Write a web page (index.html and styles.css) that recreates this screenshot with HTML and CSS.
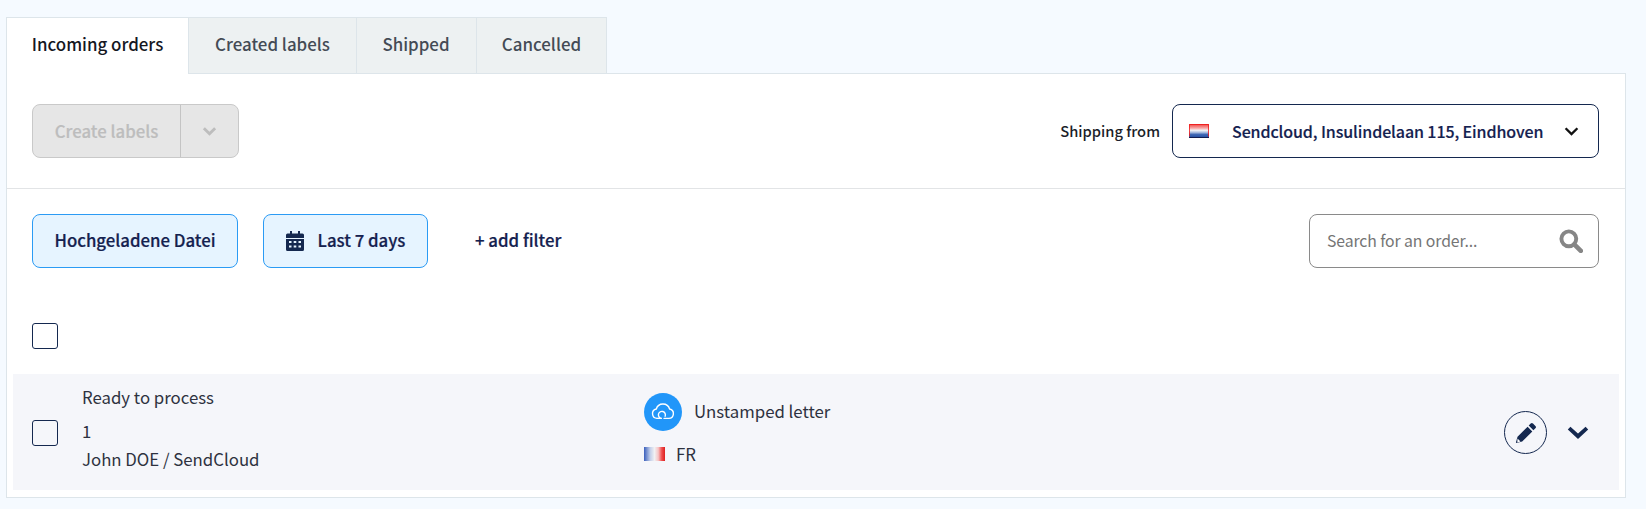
FILE: index.html
```html
<!DOCTYPE html>
<html lang="en">
<head>
<meta charset="utf-8">
<title>Incoming orders</title>
<link rel="stylesheet" href="styles.css">
</head>
<body>
<main class="page">
  <nav class="tabs">
    <a class="tab tab-active">Incoming orders</a>
    <a class="tab tab-created">Created labels</a>
    <a class="tab tab-shipped">Shipped</a>
    <a class="tab tab-cancelled">Cancelled</a>
  </nav>
  <section class="panel">
    <div class="toolbar">
      <div class="split">
        <span class="split-main">Create labels</span>
        <span class="split-arrow">
          <svg class="chev-sm" viewBox="0 0 16 10"><path d="M2 2l6 6 6-6" fill="none" stroke="currentColor" stroke-width="3"/></svg>
        </span>
      </div>
      <div class="ship">
        <span class="ship-label">Shipping from</span>
        <div class="ship-select">
          <svg class="flag-nl" viewBox="0 0 20 14">
            <defs>
              <linearGradient id="nl" x1="0" y1="0" x2="0" y2="1">
                <stop offset="0" stop-color="#f0403f"/><stop offset=".3" stop-color="#f8a9a8"/>
                <stop offset=".45" stop-color="#f4f4f6"/><stop offset=".6" stop-color="#a9bde0"/>
                <stop offset=".75" stop-color="#3f68b5"/><stop offset="1" stop-color="#1f4a9e"/>
              </linearGradient>
            </defs>
            <rect width="20" height="14" fill="url(#nl)"/>
            <path d="M.5 12.5V.5h19v12" fill="none" stroke="#f01616" stroke-opacity=".8"/>
            <path d="M0 13.5h20" stroke="#111d50"/>
          </svg>
          <span class="ship-text">Sendcloud, Insulindelaan 115, Eindhoven</span>
          <svg class="chev-ship" viewBox="0 0 14 10"><path d="M1.5 2l5.5 5.500L12.500 2" fill="none" stroke="#111" stroke-width="2.200"/></svg>
        </div>
      </div>
    </div>
    <div class="filters">
      <button class="chip chip-file">Hochgeladene Datei</button>
      <button class="chip chip-date">
        <svg class="cal" viewBox="0 0 18 20">
          <path fill="#14284f" d="M4 0h2v2.500h6V0h2v2.500h2.500A1.500 1.500 0 0 1 18 4v3H0V4a1.500 1.500 0 0 1 1.500-1.500H4z"/>
          <path fill="#14284f" fill-rule="evenodd" d="M0 8h18v10.500a1.500 1.500 0 0 1-1.500 1.500h-15A1.500 1.500 0 0 1 0 18.500zM3 10v2h2.500v-2zm4.700 0v2h2.600v-2zm4.800 0v2H15v-2zM3 14.500v2h2.500v-2zm4.700 0v2h2.600v-2zm4.800 0v2H15v-2z"/>
        </svg>
        <span>Last 7 days</span>
      </button>
      <a class="add-filter">+ add filter</a>
      <label class="search">
        <span class="search-ph">Search for an order...</span>
        <svg class="search-ico" viewBox="0 0 22 22"><circle cx="9" cy="9" r="6.800" fill="none" stroke="#868686" stroke-width="3.600"/><path d="M14 14l6 6" stroke="#868686" stroke-width="4.200" stroke-linecap="round"/></svg>
      </label>
    </div>
    <div class="select-all"><span class="check"></span></div>
    <article class="order">
      <span class="check"></span>
      <div class="order-info">
        <div class="status">Ready to process</div>
        <div class="order-no">1</div>
        <div>John DOE / SendCloud</div>
      </div>
      <div class="order-ship">
        <div class="method">
          <span class="cloud">
            <svg viewBox="0 0 24 16"><path d="M6.500 14.500a4.500 4.500 0 0 1-.8-8.900 6.500 6.500 0 0 1 12.500 0 4.500 4.500 0 0 1-.7 8.900h-4.500" fill="none" stroke="#fff" stroke-width="1.300" stroke-linecap="round"/><path d="M6.500 14.500H11a3.300 3.300 0 1 1 3-2" fill="none" stroke="#fff" stroke-width="1.300" stroke-linecap="round"/></svg>
          </span>
          <span>Unstamped letter</span>
        </div>
        <div class="dest">
          <svg class="flag-fr" viewBox="0 0 21 14">
            <defs>
              <linearGradient id="fr">
                <stop offset="0" stop-color="#3a5fbc"/><stop offset=".3" stop-color="#c3cfe9"/>
                <stop offset=".5" stop-color="#f1f1f3"/><stop offset=".68" stop-color="#f6c4c4"/>
                <stop offset=".85" stop-color="#ef4c4c"/><stop offset="1" stop-color="#dd2020"/>
              </linearGradient>
            </defs>
            <rect width="21" height="14" fill="url(#fr)"/>
          </svg>
          <span>FR</span>
        </div>
      </div>
      <div class="order-actions">
        <span class="edit">
          <svg viewBox="0 0 22 22"><path fill="#14284f" d="M15.700 1.600a1.600 1.600 0 0 1 2.300 0l2.400 2.400a1.600 1.600 0 0 1 0 2.300l-2 2-4.700-4.700zM12.600 4.700l4.700 4.700L7.200 19.500 1.500 21l-.6-.6L2.500 14.800z"/><path fill="#fff" d="M2.500 16.500l3 3-3.200 1z"/></svg>
        </span>
        <svg class="chev-row" viewBox="0 0 20 12"><path d="M1.800 2l8.200 7.500L18.200 2" fill="none" stroke="#14284f" stroke-width="3.600"/></svg>
      </div>
    </article>
  </section>
</main>
</body>
</html>
```
FILE: styles.css
```css
* { box-sizing: border-box; }
html, body { margin: 0; height: 100%; }
body {
  background: #f5faff;
  font-family: "Noto Sans CJK SC", "Noto Sans", sans-serif;
  font-size: 17px;
  line-height: 24px;
  color: #2b2f3a;
}
.page { padding: 17px 20px 0 6px; }

.tabs { display: flex; height: 57px; position: relative; z-index: 1; margin-bottom: -1px; }
.tab {
  display: flex; align-items: center; justify-content: center;
  background: #edf1f2;
  border: 1px solid #dde5ea; border-left: 0;
  color: #444b55; font-weight: 500; font-size: 16.9px;
  padding-bottom: 4px;
}
.tab-active {
  width: 183px; background: #fff; color: #15171f;
  border-left: 1px solid #dde5ea; border-bottom: 0; border-right: 1px solid #dde5ea;
}
.tab-created { width: 168px; }
.tab-shipped { width: 120px; padding-right: 1px; }
.tab-cancelled { width: 130px; }

.panel {
  background: #fff;
  border: 1px solid #dde5ea;
  height: 425px;
  padding: 0 6px;
  display: flex; flex-direction: column;
}

.toolbar {
  margin: 0 -6px;
  height: 115px;
  padding: 30px 26px 0 25px;
  border-bottom: 1px solid #e2e4e6;
  display: flex; justify-content: space-between; align-items: flex-start;
}
.split {
  display: flex; width: 207px; height: 54px;
  background: #e6e6e6; border: 1px solid #c9c9c9; border-radius: 8px;
  color: #bdbdbd; font-weight: 500; font-size: 16.8px;
  -webkit-text-stroke: .2px currentColor;
}
.split-main { width: 148px; display: flex; align-items: center; justify-content: center; border-right: 1px solid #c4c4c4; padding-bottom: 1px; }
.split-arrow { flex: 1; display: flex; align-items: center; justify-content: center; }
.chev-sm { width: 15px; height: 10px; }

.ship { display: flex; align-items: center; gap: 12px; }
.ship-label { font-size: 14.7px; font-weight: 500; color: #1c1f2a; }
.ship-select {
  width: 427px; height: 54px;
  display: flex; align-items: center;
  padding: 0 19px 0 16px;
  border: 1px solid #14284f; border-radius: 8px;
  color: #14214f; font-weight: 500; font-size: 16px; letter-spacing: -.1px;
}
.flag-nl { width: 20px; height: 14px; flex: none; }
.ship-text { margin-left: 23px; flex: 1; white-space: nowrap; padding-bottom: 1px; -webkit-text-stroke: .15px currentColor; }
.chev-ship { width: 15px; height: 11px; flex: none; }

.filters {
  display: flex; align-items: center;
  margin: 25px 20px 0 19px;
}
.chip {
  font: inherit; font-weight: 500; font-size: 16.8px;
  height: 54px; padding: 0 0 2px;
  background: #e6f4ff; border: 1px solid #2b9bf4; border-radius: 8px;
  color: #14214f;
  display: flex; align-items: center; justify-content: center;
  -webkit-text-stroke: .2px currentColor;
}
.chip-file { width: 206px; }
.chip-date { width: 165px; margin-left: 25px; gap: 14px; }
.cal { width: 18px; height: 20px; margin-top: 2px; }
.add-filter { margin-left: 47px; font-weight: 500; font-size: 16.8px; color: #14214f; padding-bottom: 2px; -webkit-text-stroke: .2px currentColor; }
.search {
  margin-left: auto; width: 290px; height: 54px;
  display: flex; align-items: center; justify-content: space-between;
  padding: 0 15px 0 17px;
  border: 1px solid #8a8a8a; border-radius: 8px;
  color: #757575; font-size: 15.8px; letter-spacing: -.1px;
}
.search-ph { padding-bottom: 1px; }
.search-ico { width: 24px; height: 24px; }

.select-all { margin: 55px 0 0 19px; height: 26px; }
.check {
  display: block; flex: none; width: 26px; height: 26px;
  background: #fff; border: 1px solid #14284f; border-radius: 3px;
}

.order {
  margin-top: 25px;
  height: 116px;
  background: #f5f6fa;
  display: flex; align-items: center;
  padding: 0 19px;
  font-size: 16.8px;
}
.order .check { background: transparent; margin-top: 1px; }
.order-info { margin-left: 24px; width: 562px; color: #2e3240; line-height: 27px; margin-bottom: 8px; }
.order-no { margin-top: 7px; margin-bottom: 1px; }
.order-ship { flex: 1; color: #2e3240; margin-bottom: 6px; }
.method { display: flex; align-items: center; gap: 12px; }
.method span:last-child { padding-bottom: 1px; }
.cloud {
  width: 38px; height: 38px; border-radius: 50%;
  background: #2196f9;
  display: flex; align-items: center; justify-content: center;
}
.cloud svg { width: 26px; height: 17px; }
.dest { display: flex; align-items: center; gap: 11px; margin-top: 11px; }
.flag-fr { width: 21px; height: 14px; }
.order-actions { display: flex; align-items: center; gap: 20px; margin-top: 1px; margin-right: 11px; }
.edit {
  width: 43px; height: 43px; border-radius: 50%;
  border: 1px solid #14284f;
  display: flex; align-items: center; justify-content: center;
}
.edit svg { width: 22px; height: 22px; }
.chev-row { width: 22px; height: 13px; }
```
